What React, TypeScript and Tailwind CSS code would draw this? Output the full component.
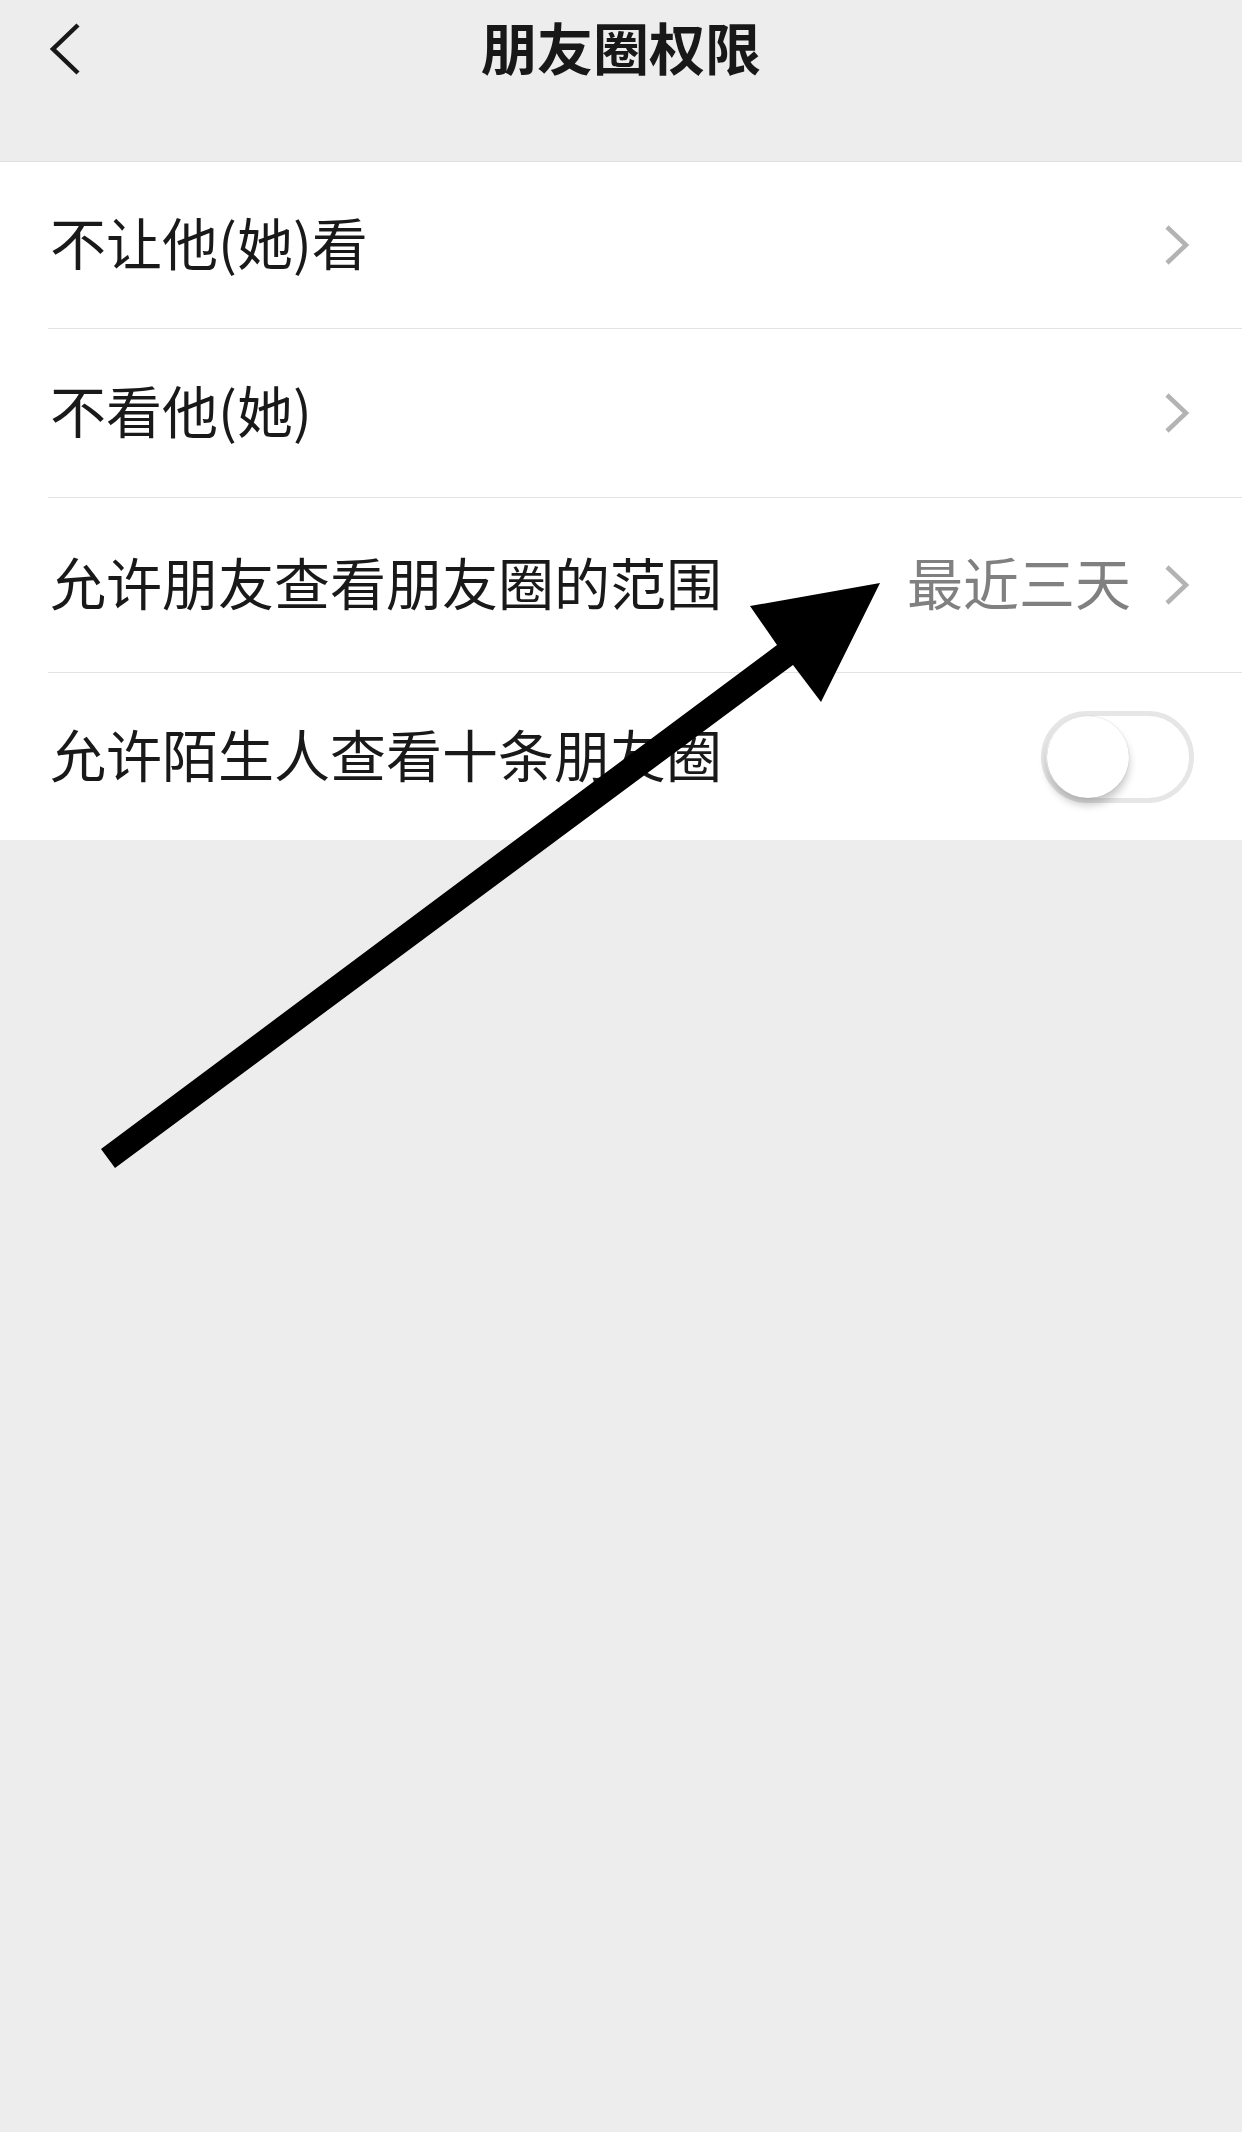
import React from "react";

const font = { fontFamily: '"Noto Sans CJK SC", "Noto Sans", sans-serif' };

const Chevron: React.FC = () => (
  <svg width="26" height="42" viewBox="0 0 26 42" className="shrink-0">
    <path d="M3 3 L22 21 L3 39" fill="none" stroke="#b3b3b3" strokeWidth="4.5" strokeLinejoin="miter" />
  </svg>
);

const Toggle: React.FC = () => (
  <div className="w-[153px] h-[92px] rounded-full border-[5px] border-[#e6e6e6] bg-white flex items-center pl-[1px]">
    <div className="w-[82px] h-[82px] rounded-full bg-white shadow-[0_7px_8px_rgba(0,0,0,0.22),0_0_1px_rgba(0,0,0,0.25)]" />
  </div>
);

interface RowProps {
  label: string;
  height: string;
  value?: string;
  right?: React.ReactNode;
}

const Row: React.FC<RowProps> = ({ label, height, value, right }) => (
  <div className={`flex items-center justify-between pl-[50px] ${height}`}>
    <span className="text-[56px] leading-none pb-[8px] text-[#191919]">{label}</span>
    {right ?? (
      <div className="flex items-center gap-[33px] pr-[52px]">
        {value && <span className="text-[56px] leading-none pb-[8px] text-[#808080]">{value}</span>}
        <Chevron />
      </div>
    )}
  </div>
);

const Divider: React.FC = () => <div className="ml-[48px] h-px bg-[#e3e3e3]" />;

export default function App() {
  return (
    <div className="relative min-h-screen bg-[#ededed]" style={font}>
      <div className="grid grid-cols-[1fr_auto_1fr] items-center h-[100px]">
        <div className="pl-[49px]">
          <svg width="32" height="56" viewBox="0 0 32 56">
            <path d="M29 3 L4 27 L29 51" fill="none" stroke="#181818" strokeWidth="4.5" />
          </svg>
        </div>
        <h1 className="text-[56px] leading-none pb-[8px] font-semibold text-[#181818]">朋友圈权限</h1>
        <div />
      </div>
      <div className="h-[61px]" />
      <div className="bg-white border-t border-[#e0e0e0]">
        <Row label="不让他(她)看" height="h-[166px]" />
        <Divider />
        <Row label="不看他(她)" height="h-[168px]" />
        <Divider />
        <Row label="允许朋友查看朋友圈的范围" value="最近三天" height="h-[174px]" />
        <Divider />
        <Row
          label="允许陌生人查看十条朋友圈"
          height="h-[167px]"
          right={
            <div className="pr-[48px]">
              <Toggle />
            </div>
          }
        />
      </div>

      {/* annotation arrow drawn over the screenshot */}
      <svg
        className="pointer-events-none absolute left-0 top-0"
        width="1242"
        height="2132"
        viewBox="0 0 1242 2132"
      >
        <polygon
          points="101,1149 777,645 750,606 880,583 821,702 793,665 115,1168"
          fill="#000"
        />
      </svg>
    </div>
  );
}
